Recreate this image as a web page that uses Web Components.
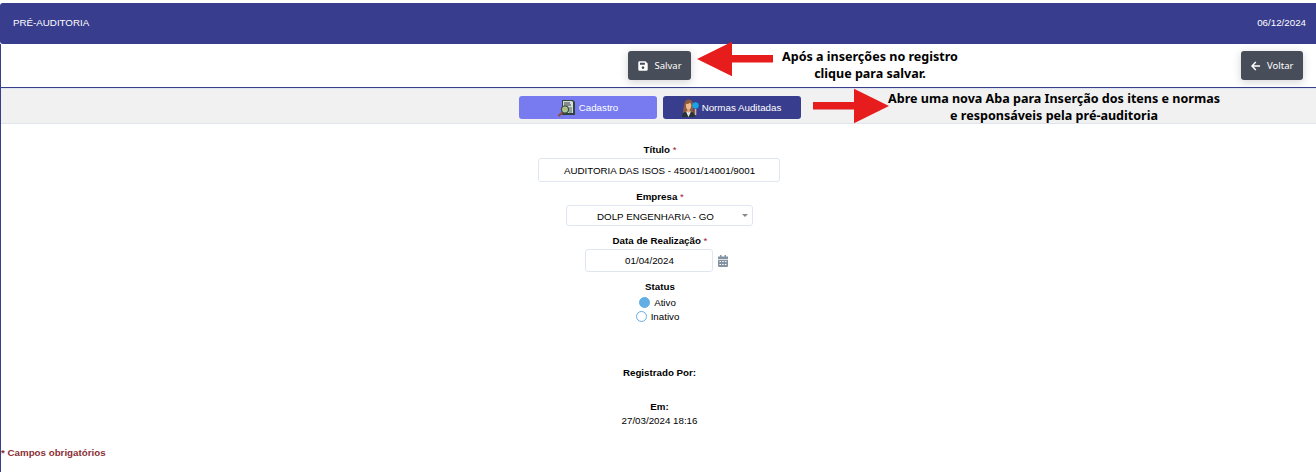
<!DOCTYPE html>
<html lang="pt-BR">
<head>
<meta charset="utf-8">
<title>Pré-auditoria</title>
<style>
html,body{margin:0;height:100%;overflow:hidden;background:#fff}
body{font:9.75px/14px "Liberation Sans",Arial,sans-serif;color:#000}
</style>
</head>
<body>
<audit-page></audit-page>
<script>
function define(name, html) {
  const t = document.createElement('template');
  t.innerHTML = html;
  customElements.define(name, class extends HTMLElement {
    constructor() {
      super();
      this.attachShadow({mode: 'open'}).append(t.content.cloneNode(true));
    }
  });
}

define('page-header', `
<style>
:host{display:flex;justify-content:space-between;align-items:center;box-sizing:border-box;height:41px;padding:0 10px 1px 13px;background:#383d8d;color:#fff;border-radius:3px 0 0 3px}
</style>
<slot></slot><slot name="date"></slot>`);

define('action-button', `
<style>
:host{display:flex;align-items:center;box-sizing:border-box;height:29px;padding:1px 0 0 10px;gap:7px;background:#474e59;color:#fff;border-radius:3px;box-shadow:0 2px 9px rgba(60,50,60,.22);font:9.5px/14px "Noto Sans","Open Sans",sans-serif}
</style>
<slot name="icon"></slot><slot></slot>`);

define('tab-button', `
<style>
:host{display:flex;align-items:center;justify-content:center;box-sizing:border-box;width:138px;height:23px;padding-top:1px;gap:3px;background:#383d8d;color:#fff;border-radius:3px}
:host([active]){background:#777bef}
</style>
<slot name="icon"></slot><slot></slot>`);

define('callout-note', `
<style>
:host{position:absolute;display:flex;flex-direction:column;align-items:center;white-space:nowrap;font:bold 12.55px/17px "Noto Sans","Open Sans",sans-serif;color:#000}
</style>
<slot></slot>`);

define('arrow-mark', `
<style>
:host{position:absolute;display:block;width:77px;height:36px}
:host([left]) svg{transform:scaleX(-1)}
svg{display:block}
</style>
<svg width="77" height="36" viewBox="0 0 77 36"><path fill="#e71d1d" d="M1 14h41V.7L77 18 42 35.300V21.6H1z"/></svg>`);

define('form-field', `
<style>
:host{display:flex;flex-direction:column;align-items:center}
.label{font-weight:bold;height:15px;padding:1px 0 0 2px;line-height:14px;white-space:pre}
.req{font-weight:normal;color:#a0203c}
:host([plain]) .req{display:none}
</style>
<div class="label"><slot name="label"></slot><span class="req"> *</span></div><slot></slot>`);

define('input-box', `
<style>
:host{display:flex;align-items:center;justify-content:center;position:relative;box-sizing:border-box;padding:1px 0 0 1px;border:1px solid #dfe6ef;border-radius:3px;background:#fff;white-space:nowrap}
:host([select])::after{content:"";position:absolute;right:4px;top:8px;border:3px solid transparent;border-top-color:#888;border-bottom:0}
:host([select]){padding:2px 7px 0 0}
</style>
<slot></slot>`);

define('radio-option', `
<style>
:host{display:flex;align-items:center;height:14px;gap:4px}
i{box-sizing:border-box;width:11px;height:11px;margin-bottom:1px;border-radius:50%;border:1.5px solid #62aee5;background:#fff}
:host([checked]) i{background:#62aee5}
</style>
<i></i><slot></slot>`);

define('audit-page', `
<style>
:host{display:flex;flex-direction:column;position:relative;height:472px;padding-top:3px;box-sizing:border-box;overflow:hidden}
.body{flex:1;display:flex;flex-direction:column;border-left:1px solid #383d8d}
.tools{display:grid;grid-template-columns:1fr auto 1fr;align-items:center;height:43px;padding:0 13px 0 13px;border-bottom:1px solid #383d8d}
.tools action-button:first-of-type{grid-column:2;width:63px;margin-left:1px}
.tools action-button:last-of-type{grid-column:3;justify-self:end;width:62px}
.tabs{display:flex;justify-content:center;align-items:flex-start;gap:6px;height:36px;padding:8px 0 0 3px;box-sizing:border-box;background:#f1f1f1;border-bottom:1px solid #e0e4ec;box-shadow:inset 0 1px #dfe5ee}
.form{display:flex;flex-direction:column;align-items:center;padding:18px 0 0 1px}
.date{display:flex;align-items:center;gap:6px;margin-left:15px}
svg{display:block;flex:none}
.b{font-weight:bold}
.meta{padding-left:1px}
.foot{margin:auto 0 12px 0;color:#8a3034;font-weight:bold}
</style>
<page-header><span>PRÉ-AUDITORIA</span><span slot="date">06/12/2024</span></page-header>
<div class="body">
 <div class="tools">
  <action-button><svg slot="icon" width="10" height="10" viewBox="0 0 10 10"><path fill="#fff" fill-rule="evenodd" d="M1.3.3h6.2L9.7 2.5v6q0 1.2-1.2 1.2h-7Q.3 9.7.3 8.500V1.400Q.3.3 1.300.3zM2 1.700v2.100h4.900V1.700zM5 5.200a1.400 1.400 0 1 0 .01 0z"/></svg><span>Salvar</span></action-button>
  <action-button><svg slot="icon" width="9" height="10" viewBox="0 0 9 10"><path fill="none" stroke="#fff" stroke-width="1.6" d="M4.800 1 1 5l3.800 4M1 5h8"/></svg><span>Voltar</span></action-button>
 </div>
 <div class="tabs">
  <tab-button active><svg slot="icon" width="18" height="18" viewBox="0 0 18 18"><path d="M4 1h11l2 2v13H4z" fill="#30443f"/><path d="M5 2h9l1 1v11H5z" fill="#d5dcda"/><path d="M7 3v2M9 3v2M11 3v2M6 6h7" stroke="#333b42"/><path d="M11 8h3v6h-3z" fill="#8fa19b"/><circle cx="7" cy="10.500" r="3.500" fill="#a9c9a0" stroke="#3d4b33" stroke-width="1.200"/><path d="M6 9h2v2H6z" fill="#cfa54d"/><path d="m4.500 13.500-4 3.500" stroke="#914a40" stroke-width="2"/></svg><span>Cadastro</span></tab-button>
  <tab-button style="padding-right:2px"><svg slot="icon" width="18" height="18" viewBox="0 0 18 18"><path d="M2.500 15q-1-2 .5-9 1-5.500 4.500-5.500Q12 .5 12 6q0 5 1 9z" fill="#8c5a3c"/><path d="M5 5q3 0 4-1.500L10.300 6q0 4.500-2.800 5Q5 10.500 5 7z" fill="#edba91"/><path d="M1 18q0-5 4-5h5q4 0 4 5z" fill="#283338"/><path d="m5 12.500 2.500 5.500 2.500-5.500z" fill="#e5e7e7"/><path d="M6.300 10h2.500v2.500L7.500 14l-1.200-1.500z" fill="#dfa57b"/><path d="M14.500 10v6" stroke="#e5af86" stroke-width="1.600"/><circle cx="14.500" cy="6.500" r="3.200" fill="#18a4e4"/></svg><span>Normas Auditadas</span></tab-button>
 </div>
 <div class="form">
  <form-field><span slot="label">Título</span><input-box style="width:242px;height:24px">AUDITORIA DAS ISOS - 45001/14001/9001</input-box></form-field>
  <form-field style="margin-top:7px"><span slot="label">Empresa</span><input-box select style="width:187px;height:21px">DOLP ENGENHARIA - GO</input-box></form-field>
  <form-field style="margin-top:7px"><span slot="label">Data de Realização</span><div class="date" style="margin-left:-4px"><input-box style="width:128px;height:23px">01/04/2024</input-box><svg width="10" height="12" viewBox="0 0 10 12" style="margin-left:-1px;margin-right:1px"><path fill="#8493a2" d="M2 0h1.500v1.500h3V0H8v1.500h2V4H0V1.500h2z"/><path fill="#8493a2" d="M0 4.700h10V11q0 1-1 1H1q-1 0-1-1z"/><path d="M1.500 6.500h7M1.500 9.500h7" stroke="#fff" stroke-width="1" stroke-dasharray="1.500 1.200"/></svg></div></form-field>
  <form-field plain style="margin-top:7px"><span slot="label">Status</span><radio-option checked style="margin:1px 0 0 -3px">Ativo</radio-option><radio-option style="margin-left:-3px">Inativo</radio-option></form-field>
  <div class="b meta" style="margin-top:42px">Registrado Por:</div>
  <div class="b meta" style="margin-top:20px">Em:</div>
  <div class="meta">27/03/2024 18:16</div>
 </div>
 <div class="foot">* Campos obrigatórios</div>
</div>
<arrow-mark left style="left:697px;top:41px"></arrow-mark>
<callout-note style="left:782px;top:48px;width:176px"><span>Após a inserções no registro</span><span>clique para salvar.</span></callout-note>
<arrow-mark style="left:812px;top:88px"></arrow-mark>
<callout-note style="left:888px;top:90px;width:332px"><span>Abre uma nova Aba para Inserção dos itens e normas</span><span>e responsáveis pela pré-auditoria</span></callout-note>`);
</script>
</body>
</html>
